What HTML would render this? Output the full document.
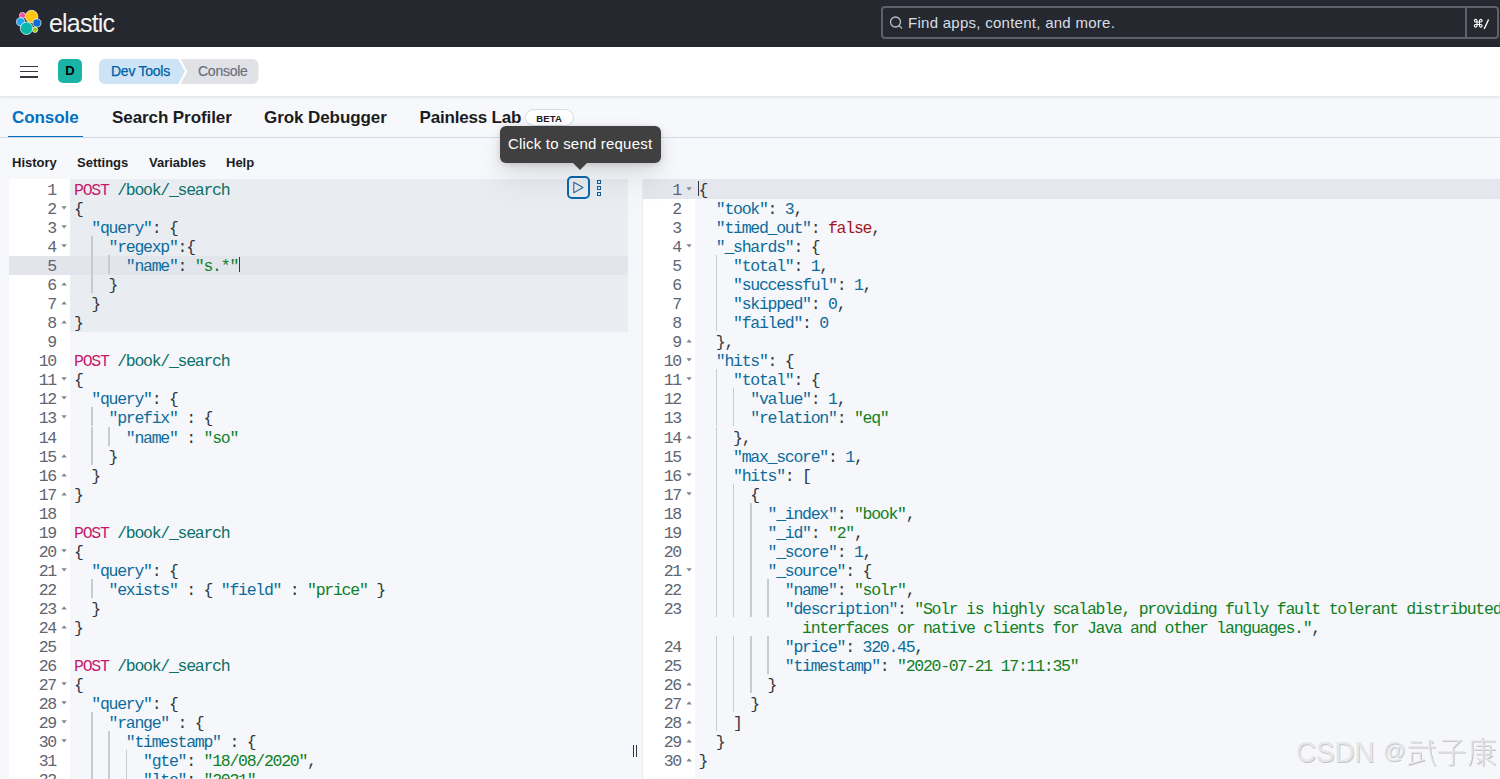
<!DOCTYPE html>
<html><head><meta charset="utf-8">
<style>
*{margin:0;padding:0;box-sizing:border-box}
html,body{width:1500px;height:779px;overflow:hidden;background:#f7f8fc;font-family:"Liberation Sans",sans-serif;position:relative}
.abs{position:absolute}
#hdr{position:absolute;left:0;top:0;width:1500px;height:47px;background:#25282f}
#bar{position:absolute;left:0;top:47px;width:1500px;height:49px;background:#fff;box-shadow:0 1px 3px rgba(0,0,0,.12)}
.tab{position:absolute;top:108px;letter-spacing:-0.08px;font-size:17px;font-weight:bold;color:#1a1c21;white-space:nowrap}
.menu{position:absolute;top:155px;font-size:13px;font-weight:bold;color:#1a1c21;white-space:nowrap}
.ed{position:absolute;top:179px;height:600px}
.ln{position:absolute;height:19px;line-height:19px;text-align:right;font-family:"Liberation Mono",monospace;font-size:16.5px;letter-spacing:-1.27px;color:#5f6571;padding-top:2px}
.cl{position:absolute;height:19px;line-height:19px;white-space:pre;font-family:"Liberation Mono",monospace;font-size:16.5px;letter-spacing:-1.27px;color:#343741;padding-top:2px}
.g{position:absolute;width:1.5px;height:19px;background:#c6cad1}
.fd,.fu{position:absolute}

.m{color:#c51a6c}
.u{color:#0a7068}
.k{color:#0d6b9c}
.s{color:#0f8025}
.n{color:#0d6b9c}
.f{color:#a3151a}
</style></head><body>
<div id="hdr"></div>
<!-- logo -->
<svg class="abs" style="left:16px;top:9px" width="28" height="28" viewBox="0 0 28 28">
  <circle cx="15.6" cy="7.6" r="6.3" fill="#fec514" stroke="#fff" stroke-width="0.7"/>
  <circle cx="6.5" cy="6.4" r="3" fill="#f04e98" stroke="#fff" stroke-width="0.7"/>
  <circle cx="4.6" cy="12.8" r="4.1" fill="#1ba9f5" stroke="#fff" stroke-width="0.7"/>
  <circle cx="20.9" cy="14" r="4.1" fill="#0b6fd6" stroke="#fff" stroke-width="0.7"/>
  <circle cx="19" cy="20.7" r="2.7" fill="#93c90e" stroke="#fff" stroke-width="0.7"/>
  <circle cx="10.5" cy="19.3" r="6.2" fill="#0bb9ab" stroke="#fff" stroke-width="0.7"/>
</svg>
<div class="abs" style="left:49px;top:9px;font-size:25px;color:#f2f3f5;letter-spacing:-0.8px">elastic</div>
<!-- search -->
<div class="abs" style="left:880.5px;top:6px;width:618.5px;height:33px;border:2px solid #5d616b;border-radius:4px;background:#25282f"></div>
<div class="abs" style="left:1465px;top:7px;width:2px;height:31px;background:#5d616b"></div>
<svg class="abs" style="left:888px;top:15px" width="16" height="16" viewBox="0 0 16 16"><circle cx="7.5" cy="7" r="5" fill="none" stroke="#b9bfca" stroke-width="1.3"/><line x1="11" y1="10.5" x2="14" y2="13.5" stroke="#b9bfca" stroke-width="1.3"/></svg>
<div class="abs" style="left:908px;top:14px;font-size:15px;letter-spacing:0.27px;color:#d9dee6;white-space:nowrap">Find apps, content, and more.</div>
<svg class="abs" style="left:1473px;top:18px" width="18" height="13" viewBox="0 0 18 13">
 <g fill="none" stroke="#fff" stroke-width="1.1">
  <path d="M4 4 H6.5 V6.5 H4 Z"/>
  <path d="M4 4 H2.9 A1.3 1.3 0 1 1 4 2.8 V4 M6.5 4 V2.8 A1.3 1.3 0 1 1 7.7 4 H6.5 M6.5 6.5 H7.7 A1.3 1.3 0 1 1 6.5 7.8 V6.5 M4 6.5 V7.8 A1.3 1.3 0 1 1 2.9 6.5 H4"/>
  <path d="M15.6 1.5 L11.2 11" stroke-width="1.4"/>
 </g>
</svg>

<div id="bar"></div>
<div class="abs" style="left:20px;top:65.5px;width:17.5px;height:1.7px;background:#343741"></div>
<div class="abs" style="left:20px;top:70.8px;width:17.5px;height:1.7px;background:#343741"></div>
<div class="abs" style="left:20px;top:76.1px;width:17.5px;height:1.7px;background:#343741"></div>
<div class="abs" style="left:58px;top:59px;width:24px;height:24px;border-radius:5px;background:#19b4a5;color:#000;font-size:13px;font-weight:bold;text-align:center;line-height:24px">D</div>
<svg class="abs" style="left:99px;top:59px" width="162" height="25" viewBox="0 0 162 25">
  <path d="M6 0 H153.5 A6 6 0 0 1 159.5 6 V19 A6 6 0 0 1 153.5 25 H79 L86 12.5 L79 0 Z" fill="#e1e2e6"/>
  <path d="M6 0 H79 L86 12.5 L79 25 H6 A6 6 0 0 1 0 19 V6 A6 6 0 0 1 6 0 Z" fill="#cce4f5"/>
  <path d="M80 -1 L87.2 12.5 L80 26" fill="none" stroke="#fff" stroke-width="2"/>
</svg>
<div class="abs" style="left:111px;top:63px;font-size:14px;letter-spacing:-0.25px;color:#0061a6;-webkit-text-stroke:0.25px #0061a6;white-space:nowrap">Dev Tools</div>
<div class="abs" style="left:198px;top:63px;font-size:14px;letter-spacing:-0.25px;color:#69707d;-webkit-text-stroke:0.2px #69707d;white-space:nowrap">Console</div>

<!-- tabs -->
<div class="tab" style="left:12px;color:#0071c2">Console</div>
<div class="abs" style="left:8px;top:136px;width:75px;height:2px;background:#0071c2"></div>
<div class="tab" style="left:112px">Search Profiler</div>
<div class="tab" style="left:264px">Grok Debugger</div>
<div class="tab" style="left:419.5px;letter-spacing:-0.18px">Painless Lab</div>
<div class="abs" style="left:524.5px;top:108.5px;width:49.5px;height:17.5px;border:1px solid #d3dae6;border-radius:9px;background:#fff;font-size:9.6px;font-weight:bold;color:#1a1c21;text-align:center;line-height:18px;letter-spacing:0.1px">BETA</div>
<div class="abs" style="left:0;top:137px;width:1500px;height:1px;background:#d3dae6"></div>

<div class="menu" style="left:12px">History</div>
<div class="menu" style="left:77px">Settings</div>
<div class="menu" style="left:149px">Variables</div>
<div class="menu" style="left:226px">Help</div>

<!-- editors bg -->
<div class="ed" style="left:9px;width:634px;background:#f5f7fa"></div>
<div class="ed" style="left:9px;width:61px;background:#fff"></div>
<div class="abs" style="left:70px;top:179px;width:558px;height:153px;background:#e9edf2"></div>
<div class="abs" style="left:9px;top:255.5px;width:619px;height:19px;background:#e2e6ec"></div>
<div class="abs" style="left:643px;top:179px;width:857px;height:600px;background:#f5f7fa"></div>
<div class="abs" style="left:643px;top:179px;width:52px;height:600px;background:#fff"></div>
<div class="abs" style="left:643px;top:179px;width:857px;height:19.5px;background:#e4e8ee"></div>
<div class="abs" style="left:642px;top:179px;width:1px;height:600px;background:#e9ecf1"></div>

<div id="left">
<div class="ln" style="top:179.0px;left:9px;width:47px">1</div>
<div class="cl" style="top:179.0px;left:74.0px"><span class="m">POST</span> <span class="u">/book/_search</span></div>
<div class="ln" style="top:198.04px;left:9px;width:47px">2</div>
<svg class="fd" style="top:205.04px;left:61px" width="7" height="6"><path d="M0.4 1.2 H5.8 L3.1 4.4 Z" fill="#80858e"/></svg>
<div class="cl" style="top:198.04px;left:74.0px">{</div>
<div class="ln" style="top:217.08px;left:9px;width:47px">3</div>
<svg class="fd" style="top:224.08px;left:61px" width="7" height="6"><path d="M0.4 1.2 H5.8 L3.1 4.4 Z" fill="#80858e"/></svg>
<div class="cl" style="top:217.08px;left:74.0px">  <span class="k">&quot;query&quot;</span>: {</div>
<div class="ln" style="top:236.12px;left:9px;width:47px">4</div>
<svg class="fd" style="top:243.12px;left:61px" width="7" height="6"><path d="M0.4 1.2 H5.8 L3.1 4.4 Z" fill="#80858e"/></svg>
<div class="g" style="top:236.12px;left:91.01px"></div>
<div class="cl" style="top:236.12px;left:74.0px">    <span class="k">&quot;regexp&quot;</span>:{</div>
<div class="ln" style="top:255.16px;left:9px;width:47px">5</div>
<div class="g" style="top:255.16px;left:91.01px"></div>
<div class="g" style="top:255.16px;left:108.27px"></div>
<div class="cl" style="top:255.16px;left:74.0px">      <span class="k">&quot;name&quot;</span>: <span class="s">&quot;s.*&quot;</span></div>
<div class="ln" style="top:274.2px;left:9px;width:47px">6</div>
<svg class="fu" style="top:281.2px;left:61px" width="7" height="6"><path d="M0.4 4.4 H5.8 L3.1 1.2 Z" fill="#80858e"/></svg>
<div class="g" style="top:274.2px;left:91.01px"></div>
<div class="cl" style="top:274.2px;left:74.0px">    }</div>
<div class="ln" style="top:293.24px;left:9px;width:47px">7</div>
<svg class="fu" style="top:300.24px;left:61px" width="7" height="6"><path d="M0.4 4.4 H5.8 L3.1 1.2 Z" fill="#80858e"/></svg>
<div class="cl" style="top:293.24px;left:74.0px">  }</div>
<div class="ln" style="top:312.28px;left:9px;width:47px">8</div>
<svg class="fu" style="top:319.28px;left:61px" width="7" height="6"><path d="M0.4 4.4 H5.8 L3.1 1.2 Z" fill="#80858e"/></svg>
<div class="cl" style="top:312.28px;left:74.0px">}</div>
<div class="ln" style="top:331.32px;left:9px;width:47px">9</div>
<div class="cl" style="top:331.32px;left:74.0px"></div>
<div class="ln" style="top:350.36px;left:9px;width:47px">10</div>
<div class="cl" style="top:350.36px;left:74.0px"><span class="m">POST</span> <span class="u">/book/_search</span></div>
<div class="ln" style="top:369.4px;left:9px;width:47px">11</div>
<svg class="fd" style="top:376.4px;left:61px" width="7" height="6"><path d="M0.4 1.2 H5.8 L3.1 4.4 Z" fill="#80858e"/></svg>
<div class="cl" style="top:369.4px;left:74.0px">{</div>
<div class="ln" style="top:388.44px;left:9px;width:47px">12</div>
<svg class="fd" style="top:395.44px;left:61px" width="7" height="6"><path d="M0.4 1.2 H5.8 L3.1 4.4 Z" fill="#80858e"/></svg>
<div class="cl" style="top:388.44px;left:74.0px">  <span class="k">&quot;query&quot;</span>: {</div>
<div class="ln" style="top:407.48px;left:9px;width:47px">13</div>
<svg class="fd" style="top:414.48px;left:61px" width="7" height="6"><path d="M0.4 1.2 H5.8 L3.1 4.4 Z" fill="#80858e"/></svg>
<div class="g" style="top:407.48px;left:91.01px"></div>
<div class="cl" style="top:407.48px;left:74.0px">    <span class="k">&quot;prefix&quot;</span> : {</div>
<div class="ln" style="top:426.52px;left:9px;width:47px">14</div>
<div class="g" style="top:426.52px;left:91.01px"></div>
<div class="g" style="top:426.52px;left:108.27px"></div>
<div class="cl" style="top:426.52px;left:74.0px">      <span class="k">&quot;name&quot;</span> : <span class="s">&quot;so&quot;</span></div>
<div class="ln" style="top:445.56px;left:9px;width:47px">15</div>
<svg class="fu" style="top:452.56px;left:61px" width="7" height="6"><path d="M0.4 4.4 H5.8 L3.1 1.2 Z" fill="#80858e"/></svg>
<div class="g" style="top:445.56px;left:91.01px"></div>
<div class="cl" style="top:445.56px;left:74.0px">    }</div>
<div class="ln" style="top:464.6px;left:9px;width:47px">16</div>
<svg class="fu" style="top:471.6px;left:61px" width="7" height="6"><path d="M0.4 4.4 H5.8 L3.1 1.2 Z" fill="#80858e"/></svg>
<div class="cl" style="top:464.6px;left:74.0px">  }</div>
<div class="ln" style="top:483.64px;left:9px;width:47px">17</div>
<svg class="fu" style="top:490.64px;left:61px" width="7" height="6"><path d="M0.4 4.4 H5.8 L3.1 1.2 Z" fill="#80858e"/></svg>
<div class="cl" style="top:483.64px;left:74.0px">}</div>
<div class="ln" style="top:502.68px;left:9px;width:47px">18</div>
<div class="cl" style="top:502.68px;left:74.0px"></div>
<div class="ln" style="top:521.72px;left:9px;width:47px">19</div>
<div class="cl" style="top:521.72px;left:74.0px"><span class="m">POST</span> <span class="u">/book/_search</span></div>
<div class="ln" style="top:540.76px;left:9px;width:47px">20</div>
<svg class="fd" style="top:547.76px;left:61px" width="7" height="6"><path d="M0.4 1.2 H5.8 L3.1 4.4 Z" fill="#80858e"/></svg>
<div class="cl" style="top:540.76px;left:74.0px">{</div>
<div class="ln" style="top:559.8px;left:9px;width:47px">21</div>
<svg class="fd" style="top:566.8px;left:61px" width="7" height="6"><path d="M0.4 1.2 H5.8 L3.1 4.4 Z" fill="#80858e"/></svg>
<div class="cl" style="top:559.8px;left:74.0px">  <span class="k">&quot;query&quot;</span>: {</div>
<div class="ln" style="top:578.84px;left:9px;width:47px">22</div>
<div class="g" style="top:578.84px;left:91.01px"></div>
<div class="cl" style="top:578.84px;left:74.0px">    <span class="k">&quot;exists&quot;</span> : { <span class="k">&quot;field&quot;</span> : <span class="s">&quot;price&quot;</span> }</div>
<div class="ln" style="top:597.88px;left:9px;width:47px">23</div>
<svg class="fu" style="top:604.88px;left:61px" width="7" height="6"><path d="M0.4 4.4 H5.8 L3.1 1.2 Z" fill="#80858e"/></svg>
<div class="cl" style="top:597.88px;left:74.0px">  }</div>
<div class="ln" style="top:616.92px;left:9px;width:47px">24</div>
<svg class="fu" style="top:623.92px;left:61px" width="7" height="6"><path d="M0.4 4.4 H5.8 L3.1 1.2 Z" fill="#80858e"/></svg>
<div class="cl" style="top:616.92px;left:74.0px">}</div>
<div class="ln" style="top:635.96px;left:9px;width:47px">25</div>
<div class="cl" style="top:635.96px;left:74.0px"></div>
<div class="ln" style="top:655.0px;left:9px;width:47px">26</div>
<div class="cl" style="top:655.0px;left:74.0px"><span class="m">POST</span> <span class="u">/book/_search</span></div>
<div class="ln" style="top:674.04px;left:9px;width:47px">27</div>
<svg class="fd" style="top:681.04px;left:61px" width="7" height="6"><path d="M0.4 1.2 H5.8 L3.1 4.4 Z" fill="#80858e"/></svg>
<div class="cl" style="top:674.04px;left:74.0px">{</div>
<div class="ln" style="top:693.08px;left:9px;width:47px">28</div>
<svg class="fd" style="top:700.08px;left:61px" width="7" height="6"><path d="M0.4 1.2 H5.8 L3.1 4.4 Z" fill="#80858e"/></svg>
<div class="cl" style="top:693.08px;left:74.0px">  <span class="k">&quot;query&quot;</span>: {</div>
<div class="ln" style="top:712.12px;left:9px;width:47px">29</div>
<svg class="fd" style="top:719.12px;left:61px" width="7" height="6"><path d="M0.4 1.2 H5.8 L3.1 4.4 Z" fill="#80858e"/></svg>
<div class="g" style="top:712.12px;left:91.01px"></div>
<div class="cl" style="top:712.12px;left:74.0px">    <span class="k">&quot;range&quot;</span> : {</div>
<div class="ln" style="top:731.16px;left:9px;width:47px">30</div>
<svg class="fd" style="top:738.16px;left:61px" width="7" height="6"><path d="M0.4 1.2 H5.8 L3.1 4.4 Z" fill="#80858e"/></svg>
<div class="g" style="top:731.16px;left:91.01px"></div>
<div class="g" style="top:731.16px;left:108.27px"></div>
<div class="cl" style="top:731.16px;left:74.0px">      <span class="k">&quot;timestamp&quot;</span> : {</div>
<div class="ln" style="top:750.2px;left:9px;width:47px">31</div>
<div class="g" style="top:750.2px;left:91.01px"></div>
<div class="g" style="top:750.2px;left:108.27px"></div>
<div class="g" style="top:750.2px;left:125.53px"></div>
<div class="cl" style="top:750.2px;left:74.0px">        <span class="k">&quot;gte&quot;</span>: <span class="s">&quot;18/08/2020&quot;</span>,</div>
<div class="ln" style="top:769.24px;left:9px;width:47px">32</div>
<div class="g" style="top:769.24px;left:91.01px"></div>
<div class="g" style="top:769.24px;left:108.27px"></div>
<div class="g" style="top:769.24px;left:125.53px"></div>
<div class="cl" style="top:769.24px;left:74.0px">        <span class="k">&quot;lte&quot;</span>: <span class="s">&quot;2021&quot;</span></div>
</div>
<div class="abs" style="left:239px;top:257px;width:1px;height:15px;background:#343741"></div>
<div id="right">
<div class="ln" style="top:179.0px;left:643px;width:38px">1</div>
<svg class="fd" style="top:186.0px;left:686px" width="7" height="6"><path d="M0.4 1.2 H5.8 L3.1 4.4 Z" fill="#80858e"/></svg>
<div class="cl" style="top:179.0px;left:698.5px">{</div>
<div class="ln" style="top:198.04px;left:643px;width:38px">2</div>
<div class="cl" style="top:198.04px;left:698.5px">  <span class="k">&quot;took&quot;</span>: <span class="n">3</span>,</div>
<div class="ln" style="top:217.08px;left:643px;width:38px">3</div>
<div class="cl" style="top:217.08px;left:698.5px">  <span class="k">&quot;timed_out&quot;</span>: <span class="f">false</span>,</div>
<div class="ln" style="top:236.12px;left:643px;width:38px">4</div>
<svg class="fd" style="top:243.12px;left:686px" width="7" height="6"><path d="M0.4 1.2 H5.8 L3.1 4.4 Z" fill="#80858e"/></svg>
<div class="cl" style="top:236.12px;left:698.5px">  <span class="k">&quot;_shards&quot;</span>: {</div>
<div class="ln" style="top:255.16px;left:643px;width:38px">5</div>
<div class="g" style="top:255.16px;left:715.51px"></div>
<div class="cl" style="top:255.16px;left:698.5px">    <span class="k">&quot;total&quot;</span>: <span class="n">1</span>,</div>
<div class="ln" style="top:274.2px;left:643px;width:38px">6</div>
<div class="g" style="top:274.2px;left:715.51px"></div>
<div class="cl" style="top:274.2px;left:698.5px">    <span class="k">&quot;successful&quot;</span>: <span class="n">1</span>,</div>
<div class="ln" style="top:293.24px;left:643px;width:38px">7</div>
<div class="g" style="top:293.24px;left:715.51px"></div>
<div class="cl" style="top:293.24px;left:698.5px">    <span class="k">&quot;skipped&quot;</span>: <span class="n">0</span>,</div>
<div class="ln" style="top:312.28px;left:643px;width:38px">8</div>
<div class="g" style="top:312.28px;left:715.51px"></div>
<div class="cl" style="top:312.28px;left:698.5px">    <span class="k">&quot;failed&quot;</span>: <span class="n">0</span></div>
<div class="ln" style="top:331.32px;left:643px;width:38px">9</div>
<svg class="fu" style="top:338.32px;left:686px" width="7" height="6"><path d="M0.4 4.4 H5.8 L3.1 1.2 Z" fill="#80858e"/></svg>
<div class="cl" style="top:331.32px;left:698.5px">  },</div>
<div class="ln" style="top:350.36px;left:643px;width:38px">10</div>
<svg class="fd" style="top:357.36px;left:686px" width="7" height="6"><path d="M0.4 1.2 H5.8 L3.1 4.4 Z" fill="#80858e"/></svg>
<div class="cl" style="top:350.36px;left:698.5px">  <span class="k">&quot;hits&quot;</span>: {</div>
<div class="ln" style="top:369.4px;left:643px;width:38px">11</div>
<svg class="fd" style="top:376.4px;left:686px" width="7" height="6"><path d="M0.4 1.2 H5.8 L3.1 4.4 Z" fill="#80858e"/></svg>
<div class="g" style="top:369.4px;left:715.51px"></div>
<div class="cl" style="top:369.4px;left:698.5px">    <span class="k">&quot;total&quot;</span>: {</div>
<div class="ln" style="top:388.44px;left:643px;width:38px">12</div>
<div class="g" style="top:388.44px;left:715.51px"></div>
<div class="g" style="top:388.44px;left:732.77px"></div>
<div class="cl" style="top:388.44px;left:698.5px">      <span class="k">&quot;value&quot;</span>: <span class="n">1</span>,</div>
<div class="ln" style="top:407.48px;left:643px;width:38px">13</div>
<div class="g" style="top:407.48px;left:715.51px"></div>
<div class="g" style="top:407.48px;left:732.77px"></div>
<div class="cl" style="top:407.48px;left:698.5px">      <span class="k">&quot;relation&quot;</span>: <span class="s">&quot;eq&quot;</span></div>
<div class="ln" style="top:426.52px;left:643px;width:38px">14</div>
<svg class="fu" style="top:433.52px;left:686px" width="7" height="6"><path d="M0.4 4.4 H5.8 L3.1 1.2 Z" fill="#80858e"/></svg>
<div class="g" style="top:426.52px;left:715.51px"></div>
<div class="cl" style="top:426.52px;left:698.5px">    },</div>
<div class="ln" style="top:445.56px;left:643px;width:38px">15</div>
<div class="g" style="top:445.56px;left:715.51px"></div>
<div class="cl" style="top:445.56px;left:698.5px">    <span class="k">&quot;max_score&quot;</span>: <span class="n">1</span>,</div>
<div class="ln" style="top:464.6px;left:643px;width:38px">16</div>
<svg class="fd" style="top:471.6px;left:686px" width="7" height="6"><path d="M0.4 1.2 H5.8 L3.1 4.4 Z" fill="#80858e"/></svg>
<div class="g" style="top:464.6px;left:715.51px"></div>
<div class="cl" style="top:464.6px;left:698.5px">    <span class="k">&quot;hits&quot;</span>: [</div>
<div class="ln" style="top:483.64px;left:643px;width:38px">17</div>
<svg class="fd" style="top:490.64px;left:686px" width="7" height="6"><path d="M0.4 1.2 H5.8 L3.1 4.4 Z" fill="#80858e"/></svg>
<div class="g" style="top:483.64px;left:715.51px"></div>
<div class="g" style="top:483.64px;left:732.77px"></div>
<div class="cl" style="top:483.64px;left:698.5px">      {</div>
<div class="ln" style="top:502.68px;left:643px;width:38px">18</div>
<div class="g" style="top:502.68px;left:715.51px"></div>
<div class="g" style="top:502.68px;left:732.77px"></div>
<div class="g" style="top:502.68px;left:750.03px"></div>
<div class="cl" style="top:502.68px;left:698.5px">        <span class="k">&quot;_index&quot;</span>: <span class="s">&quot;book&quot;</span>,</div>
<div class="ln" style="top:521.72px;left:643px;width:38px">19</div>
<div class="g" style="top:521.72px;left:715.51px"></div>
<div class="g" style="top:521.72px;left:732.77px"></div>
<div class="g" style="top:521.72px;left:750.03px"></div>
<div class="cl" style="top:521.72px;left:698.5px">        <span class="k">&quot;_id&quot;</span>: <span class="s">&quot;2&quot;</span>,</div>
<div class="ln" style="top:540.76px;left:643px;width:38px">20</div>
<div class="g" style="top:540.76px;left:715.51px"></div>
<div class="g" style="top:540.76px;left:732.77px"></div>
<div class="g" style="top:540.76px;left:750.03px"></div>
<div class="cl" style="top:540.76px;left:698.5px">        <span class="k">&quot;_score&quot;</span>: <span class="n">1</span>,</div>
<div class="ln" style="top:559.8px;left:643px;width:38px">21</div>
<svg class="fd" style="top:566.8px;left:686px" width="7" height="6"><path d="M0.4 1.2 H5.8 L3.1 4.4 Z" fill="#80858e"/></svg>
<div class="g" style="top:559.8px;left:715.51px"></div>
<div class="g" style="top:559.8px;left:732.77px"></div>
<div class="g" style="top:559.8px;left:750.03px"></div>
<div class="cl" style="top:559.8px;left:698.5px">        <span class="k">&quot;_source&quot;</span>: {</div>
<div class="ln" style="top:578.84px;left:643px;width:38px">22</div>
<div class="g" style="top:578.84px;left:715.51px"></div>
<div class="g" style="top:578.84px;left:732.77px"></div>
<div class="g" style="top:578.84px;left:750.03px"></div>
<div class="g" style="top:578.84px;left:767.29px"></div>
<div class="cl" style="top:578.84px;left:698.5px">          <span class="k">&quot;name&quot;</span>: <span class="s">&quot;solr&quot;</span>,</div>
<div class="ln" style="top:597.88px;left:643px;width:38px">23</div>
<div class="g" style="top:597.88px;left:715.51px"></div>
<div class="g" style="top:597.88px;left:732.77px"></div>
<div class="g" style="top:597.88px;left:750.03px"></div>
<div class="g" style="top:597.88px;left:767.29px"></div>
<div class="cl" style="top:597.88px;left:698.5px">          <span class="k">&quot;description&quot;</span>: <span class="s">&quot;Solr is highly scalable, providing fully fault tolerant distributed</span></div>
<div class="ln" style="top:635.96px;left:643px;width:38px">24</div>
<div class="g" style="top:635.96px;left:715.51px"></div>
<div class="g" style="top:635.96px;left:732.77px"></div>
<div class="g" style="top:635.96px;left:750.03px"></div>
<div class="g" style="top:635.96px;left:767.29px"></div>
<div class="cl" style="top:635.96px;left:698.5px">          <span class="k">&quot;price&quot;</span>: <span class="n">320.45</span>,</div>
<div class="ln" style="top:655.0px;left:643px;width:38px">25</div>
<div class="g" style="top:655.0px;left:715.51px"></div>
<div class="g" style="top:655.0px;left:732.77px"></div>
<div class="g" style="top:655.0px;left:750.03px"></div>
<div class="g" style="top:655.0px;left:767.29px"></div>
<div class="cl" style="top:655.0px;left:698.5px">          <span class="k">&quot;timestamp&quot;</span>: <span class="s">&quot;2020-07-21 17:11:35&quot;</span></div>
<div class="ln" style="top:674.04px;left:643px;width:38px">26</div>
<svg class="fu" style="top:681.04px;left:686px" width="7" height="6"><path d="M0.4 4.4 H5.8 L3.1 1.2 Z" fill="#80858e"/></svg>
<div class="g" style="top:674.04px;left:715.51px"></div>
<div class="g" style="top:674.04px;left:732.77px"></div>
<div class="g" style="top:674.04px;left:750.03px"></div>
<div class="cl" style="top:674.04px;left:698.5px">        }</div>
<div class="ln" style="top:693.08px;left:643px;width:38px">27</div>
<svg class="fu" style="top:700.08px;left:686px" width="7" height="6"><path d="M0.4 4.4 H5.8 L3.1 1.2 Z" fill="#80858e"/></svg>
<div class="g" style="top:693.08px;left:715.51px"></div>
<div class="g" style="top:693.08px;left:732.77px"></div>
<div class="cl" style="top:693.08px;left:698.5px">      }</div>
<div class="ln" style="top:712.12px;left:643px;width:38px">28</div>
<svg class="fu" style="top:719.12px;left:686px" width="7" height="6"><path d="M0.4 4.4 H5.8 L3.1 1.2 Z" fill="#80858e"/></svg>
<div class="g" style="top:712.12px;left:715.51px"></div>
<div class="cl" style="top:712.12px;left:698.5px">    ]</div>
<div class="ln" style="top:731.16px;left:643px;width:38px">29</div>
<svg class="fu" style="top:738.16px;left:686px" width="7" height="6"><path d="M0.4 4.4 H5.8 L3.1 1.2 Z" fill="#80858e"/></svg>
<div class="cl" style="top:731.16px;left:698.5px">  }</div>
<div class="ln" style="top:750.2px;left:643px;width:38px">30</div>
<svg class="fu" style="top:757.2px;left:686px" width="7" height="6"><path d="M0.4 4.4 H5.8 L3.1 1.2 Z" fill="#80858e"/></svg>
<div class="cl" style="top:750.2px;left:698.5px">}</div>
<div class="cl" style="top:616.92px;left:698.5px"></div>
<div class="cl" style="top:616.92px;left:802.06px"><span class="s">interfaces or native clients for Java and other languages."</span>,</div>
</div>
<div class="abs" style="left:698px;top:181px;width:1px;height:15px;background:#343741"></div>

<!-- play button -->
<div class="abs" style="left:567px;top:176px;width:23px;height:23px;border:2px solid #0a68b0;border-radius:5px;background:transparent"></div>
<svg class="abs" style="left:572px;top:181px" width="13" height="13" viewBox="0 0 13 13"><path d="M1.8 1.2 L11 6.5 L1.8 11.8 Z" fill="none" stroke="#2f669a" stroke-width="1.1" stroke-linejoin="round"/></svg>
<div class="abs" style="left:597px;top:180px;width:4px;height:4px;border:1px solid #0a5f9e"></div>
<div class="abs" style="left:597px;top:186px;width:4px;height:4px;border:1px solid #0a5f9e"></div>
<div class="abs" style="left:597px;top:192px;width:4px;height:4px;border:1px solid #0a5f9e"></div>

<!-- tooltip -->
<div class="abs" style="left:500px;top:126px;width:161px;height:37px;background:#404040;border-radius:6px;box-shadow:0 1px 5px rgba(0,0,0,.1),0 3.6px 13px rgba(0,0,0,.07),0 8.4px 23px rgba(0,0,0,.06),0 23px 35px rgba(0,0,0,.05)"></div>
<div class="abs" style="left:572px;top:162px;width:0;height:0;border-left:8px solid transparent;border-right:8px solid transparent;border-top:8.5px solid #404040"></div>
<div class="abs" style="left:508px;top:135px;font-size:15px;letter-spacing:0.2px;color:#fff;white-space:nowrap">Click to send request</div>

<!-- resizer -->
<div class="abs" style="left:633px;top:745px;width:1px;height:12px;background:#343741"></div>
<div class="abs" style="left:636px;top:745px;width:1px;height:12px;background:#343741"></div>

<!-- watermark -->
<div class="abs" style="left:1296px;top:735px;font-size:30px;color:#e6e6e8;white-space:nowrap;text-shadow:0.8px 0.8px 0.6px #c3c3c7;transform:scaleX(0.925);transform-origin:0 0">CSDN</div>
<div class="abs" style="left:1383px;top:738px;font-size:22.5px;color:#e6e6e8;white-space:nowrap;text-shadow:0.8px 0.8px 0.6px #c3c3c7">@</div>
<svg class="abs" style="left:0;top:0" width="1500" height="779" viewBox="0 0 1500 779">
 <g fill="none" stroke-linecap="butt">
  <g stroke="#bdbdc1" stroke-width="1.6" transform="translate(0.8,0.8)">
   <path d="M1410.5 742H1421.5M1408 747H1435M1411 752.4H1420M1420.4 752.4V760M1411.6 752.4V761M1408 764.4L1424.4 759.6M1429 740C1429.5 752 1431 760 1434.8 765.5M1430.5 740L1432.5 743"/>
   <path d="M1442 740.5H1460L1453 747.5M1438 752H1465M1453 747V764.5L1448.5 765"/>
   <path d="M1482.5 737.5V741M1472 741H1495M1472 741V754C1472 759 1471 762 1469 765.5M1476 745.5H1490V754H1476M1473.5 749.5H1495M1483 741V766M1477 757.5L1481 760.5M1485 757.5L1495 764.5M1492 755L1487 758.5M1477 763.5L1482 760"/>
  </g>
  <g stroke="#e6e6e8" stroke-width="1.5">
   <path d="M1410.5 742H1421.5M1408 747H1435M1411 752.4H1420M1420.4 752.4V760M1411.6 752.4V761M1408 764.4L1424.4 759.6M1429 740C1429.5 752 1431 760 1434.8 765.5M1430.5 740L1432.5 743"/>
   <path d="M1442 740.5H1460L1453 747.5M1438 752H1465M1453 747V764.5L1448.5 765"/>
   <path d="M1482.5 737.5V741M1472 741H1495M1472 741V754C1472 759 1471 762 1469 765.5M1476 745.5H1490V754H1476M1473.5 749.5H1495M1483 741V766M1477 757.5L1481 760.5M1485 757.5L1495 764.5M1492 755L1487 758.5M1477 763.5L1482 760"/>
  </g>
 </g>
</svg>
</body></html>
